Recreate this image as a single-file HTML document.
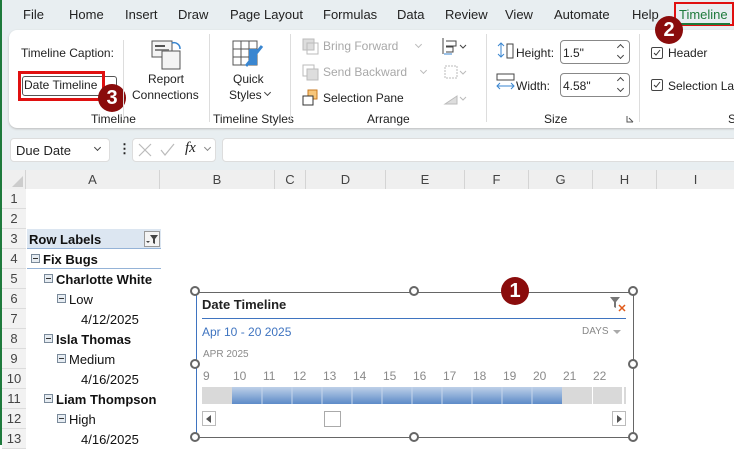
<!DOCTYPE html>
<html><head><meta charset="utf-8"><style>
*{margin:0;padding:0;box-sizing:border-box}
body{width:734px;height:445px;overflow:hidden;background:#fff;font-family:"Liberation Sans",sans-serif;font-size:12px;color:#222;position:relative}
.a{position:absolute;white-space:nowrap}
.menu{font-size:13px;top:7px;color:#222}
.rt{font-size:12px;color:#222}
.dis{color:#a8a8a8}
.cv{position:absolute;width:5px;height:5px;border-right:1.2px solid #444;border-bottom:1.2px solid #444;transform:rotate(45deg)}
.cu{position:absolute;width:5px;height:5px;border-left:1.2px solid #444;border-top:1.2px solid #444;transform:rotate(45deg)}
.cv.g{border-color:#bbb}
.badge{position:absolute;width:28px;height:28px;border-radius:50%;background:#8a0c0c;color:#fff;font-weight:bold;font-size:20px;text-align:center;line-height:28px}
.rh{position:absolute;left:2px;width:24px;height:20px;text-align:center;line-height:20px;font-size:13px;color:#444;border-bottom:1px solid #dcdcdc;background:#f2f2f2}
.cell{position:absolute;font-size:13px;line-height:20px;color:#111}
.b{font-weight:bold}
.mn{display:inline-block;width:9px;height:9px;border:1px solid #7a8a9a;background:#e6ecf2;vertical-align:1px;margin-right:3px;position:relative}
.mn:after{content:"";position:absolute;left:1px;right:1px;top:3px;height:1px;background:#333}
.ch{position:absolute;top:170px;height:19px;line-height:19px;text-align:center;font-size:13px;color:#444;border-right:1px solid #d4d4d4;background:#efefef}
.h{position:absolute;width:10px;height:10px;border:2px solid #666;border-radius:50%;background:#fff}
.day{position:absolute;top:369px;font-size:12px;color:#8a8a8a}
</style></head><body>
<div class="a" style="left:0;top:0;width:734px;height:170px;background:#e8eef1"></div>
<div class="a" style="left:0;top:0;width:2px;height:445px;background:#1e7a3c;z-index:5"></div>
<span class="a menu" style="left:23px">File</span>
<span class="a menu" style="left:69px">Home</span>
<span class="a menu" style="left:125px">Insert</span>
<span class="a menu" style="left:178px">Draw</span>
<span class="a menu" style="left:230px">Page Layout</span>
<span class="a menu" style="left:323px">Formulas</span>
<span class="a menu" style="left:397px">Data</span>
<span class="a menu" style="left:445px">Review</span>
<span class="a menu" style="left:505px">View</span>
<span class="a menu" style="left:554px">Automate</span>
<span class="a menu" style="left:632px">Help</span>
<div class="a" style="left:674px;top:2px;width:60px;height:24px;border:2px solid #e01010"></div>
<span class="a menu" style="left:679px;color:#1e7a3c">Timeline</span>
<div class="a" style="left:678px;top:23px;width:52px;height:2px;background:#1e7a3c"></div>
<div class="a" style="left:9px;top:30px;width:740px;height:98px;background:#fff;border-radius:8px;box-shadow:0 1px 2px #bbb"></div>
<span class="a rt" style="left:21px;top:46px">Timeline Caption:</span>
<div class="a" style="left:22px;top:76px;width:95px;height:20px;border:1px solid #555;border-radius:3px;background:#fff"></div>
<span class="a rt" style="left:24px;top:78px">Date Timeline</span>
<div class="a" style="left:18px;top:71px;width:87px;height:30px;border:3px solid #e01010"></div>
<div class="badge" style="left:98px;top:84px">3</div>
<span class="a rt" style="left:91px;top:112px">Timeline</span>
<div class="a" style="left:123px;top:40px;width:1px;height:80px;background:#ddd"></div>
<svg class="a" style="left:150px;top:37px" width="34" height="34"><rect x="2" y="4" width="20" height="16" fill="#f4f4f4" stroke="#555"/><rect x="5" y="8" width="10" height="2" fill="#555"/><rect x="5" y="12" width="14" height="2" fill="#888"/><rect x="12" y="14" width="18" height="18" fill="#f4f4f4" stroke="#555"/><path d="M22 6 a6 6 0 0 1 8 6" stroke="#3a86d0" fill="none" stroke-width="1.5"/></svg>
<span class="a rt" style="left:148px;top:72px">Report</span>
<span class="a rt" style="left:132px;top:88px">Connections</span>
<div class="a" style="left:209px;top:34px;width:1px;height:88px;background:#ddd"></div>
<svg class="a" style="left:232px;top:40px" width="34" height="30"><rect x="1" y="1" width="24" height="24" fill="#fff" stroke="#555"/><path d="M1 9h24M1 17h24M9 1v24M17 1v24" stroke="#555"/><rect x="17" y="9" width="8" height="16" fill="#3a86d0"/><path d="M14 26 L30 6" stroke="#3a86d0" stroke-width="3"/></svg>
<span class="a rt" style="left:233px;top:72px">Quick</span>
<span class="a rt" style="left:229px;top:88px">Styles</span><div class="cv" style="left:265px;top:90px"></div>
<span class="a rt" style="left:213px;top:112px">Timeline Styles</span>
<div class="a" style="left:290px;top:34px;width:1px;height:88px;background:#ddd"></div>
<svg class="a" style="left:302px;top:38px" width="18" height="70"><rect x="1" y="1" width="11" height="11" fill="#ddd" stroke="#bbb"/><rect x="5" y="5" width="11" height="11" fill="none" stroke="#bbb"/><rect x="1" y="27" width="11" height="11" fill="none" stroke="#bbb"/><rect x="5" y="31" width="11" height="11" fill="#ddd" stroke="#bbb"/><rect x="6" y="52" width="9" height="9" fill="#f7c67a" stroke="#c87a20"/><rect x="1" y="58" width="10" height="9" fill="#fff" stroke="#333"/></svg>
<span class="a rt dis" style="left:323px;top:39px">Bring Forward</span><div class="cv g" style="left:416px;top:42px"></div>
<span class="a rt dis" style="left:323px;top:65px">Send Backward</span><div class="cv g" style="left:421px;top:68px"></div>
<span class="a rt" style="left:323px;top:91px">Selection Pane</span>
<svg class="a" style="left:441px;top:36px" width="32" height="72"><path d="M2 2v16M5 5h10v5H5M5 11h7v5H5" stroke="#444" fill="none"/><path d="M3 18h8" stroke="#3a86d0"/><path d="M19 9l3 3 3-3" stroke="#444" fill="none"/><rect x="4" y="30" width="12" height="12" fill="none" stroke="#bbb" stroke-dasharray="2 1"/><path d="M19 35l3 3 3-3" stroke="#bbb" fill="none"/><path d="M4 68 L16 60 V68 Z" fill="#ddd" stroke="#bbb"/><path d="M19 61l3 3 3-3" stroke="#bbb" fill="none"/></svg>
<span class="a rt" style="left:367px;top:112px">Arrange</span>
<div class="a" style="left:486px;top:34px;width:1px;height:88px;background:#ddd"></div>
<svg class="a" style="left:496px;top:42px" width="20" height="52"><path d="M5 1v14M2 4l3-3 3 3M2 12l3 3 3-3" stroke="#3a86d0" fill="none"/><rect x="11" y="2" width="6" height="14" fill="none" stroke="#444"/><rect x="1" y="32" width="17" height="6" fill="none" stroke="#444"/><path d="M1 44h17M4 41l-3 3 3 3M15 41l3 3-3 3" stroke="#3a86d0" fill="none"/></svg>
<span class="a rt" style="left:516px;top:46px">Height:</span>
<span class="a rt" style="left:516px;top:79px">Width:</span>
<div class="a" style="left:560px;top:40px;width:70px;height:24px;border:1px solid #888;border-radius:4px"></div>
<div class="a" style="left:560px;top:73px;width:70px;height:24px;border:1px solid #888;border-radius:4px"></div>
<span class="a rt" style="left:563px;top:46px">1.5"</span>
<span class="a rt" style="left:563px;top:79px">4.58"</span>
<div class="cu" style="left:618px;top:45px"></div><div class="cv" style="left:618px;top:53px"></div>
<div class="cu" style="left:618px;top:78px"></div><div class="cv" style="left:618px;top:86px"></div>
<span class="a rt" style="left:544px;top:112px">Size</span>
<svg class="a" style="left:626px;top:115px" width="8" height="8"><path d="M1 1v6h6M3 3l4 4" stroke="#555" fill="none"/></svg>
<div class="a" style="left:639px;top:34px;width:1px;height:88px;background:#ddd"></div>
<div class="a" style="left:651px;top:47px;width:12px;height:12px;border:1px solid #444;border-radius:2px"></div><svg class="a" style="left:651px;top:47px" width="12" height="12"><path d="M3 6l2 2 4-5" stroke="#333" fill="none"/></svg>
<span class="a rt" style="left:668px;top:46px">Header</span>
<div class="a" style="left:651px;top:79px;width:12px;height:12px;border:1px solid #444;border-radius:2px"></div><svg class="a" style="left:651px;top:79px" width="12" height="12"><path d="M3 6l2 2 4-5" stroke="#333" fill="none"/></svg>
<span class="a rt" style="left:668px;top:79px">Selection Lab</span>
<span class="a rt" style="left:728px;top:112px">S</span>
<div class="badge" style="left:655px;top:16px">2</div>
<!-- formula bar -->
<div class="a" style="left:10px;top:138px;width:100px;height:24px;background:#fff;border-radius:4px;border:1px solid #ddd"></div>
<span class="a" style="left:16px;top:143px;font-size:13px">Due Date</span>
<div class="cv" style="left:95px;top:145px"></div>
<span class="a" style="left:118px;top:141px;font-size:13px;font-weight:bold">⋮</span>
<div class="a" style="left:132px;top:138px;width:84px;height:24px;background:#fff;border-radius:4px;border:1px solid #ddd"></div>
<svg class="a" style="left:138px;top:143px" width="40" height="14"><path d="M1 1l12 12M13 1L1 13" stroke="#bbb" stroke-width="1.2"/><path d="M23 7l4 5 9-11" stroke="#bbb" stroke-width="1.2" fill="none"/></svg>
<span class="a" style="left:185px;top:140px;font-size:15px;font-style:italic;font-family:'Liberation Serif',serif">fx</span>
<div class="cv g" style="left:205px;top:145px;border-color:#888"></div>
<div class="a" style="left:222px;top:138px;width:520px;height:24px;background:#fff;border-radius:4px;border:1px solid #ddd"></div>
<!-- column headers -->
<div class="a" style="left:2px;top:170px;width:732px;height:19px;background:#efefef;border-bottom:1px solid #bbb"></div>
<div class="ch" style="left:2px;width:24px"></div>
<svg class="a" style="left:12px;top:176px" width="12" height="12"><path d="M11 0V11H0Z" fill="#ccc"/></svg>
<div class="ch" style="left:26px;width:134px">A</div>
<div class="ch" style="left:160px;width:115px">B</div>
<div class="ch" style="left:275px;width:31px">C</div>
<div class="ch" style="left:306px;width:80px">D</div>
<div class="ch" style="left:386px;width:79px">E</div>
<div class="ch" style="left:465px;width:64px">F</div>
<div class="ch" style="left:529px;width:64px">G</div>
<div class="ch" style="left:593px;width:64px">H</div>
<div class="ch" style="left:657px;width:77px;border:none">I</div>
<div class="a" style="left:2px;top:189px;width:24px;height:256px;background:#f2f2f2;border-right:1px solid #ccc"></div>
<div class="rh" style="top:189px">1</div><div class="rh" style="top:209px">2</div><div class="rh" style="top:229px">3</div><div class="rh" style="top:249px">4</div><div class="rh" style="top:269px">5</div><div class="rh" style="top:289px">6</div><div class="rh" style="top:309px">7</div><div class="rh" style="top:329px">8</div><div class="rh" style="top:349px">9</div><div class="rh" style="top:369px">10</div><div class="rh" style="top:389px">11</div><div class="rh" style="top:409px">12</div><div class="rh" style="top:429px">13</div>
<div class="a" style="left:27px;top:229px;width:134px;height:20px;background:#dce6f1;border-bottom:1px solid #95b3d7"></div>
<span class="cell b" style="left:29px;top:230px">Row Labels</span>
<div class="a" style="left:144px;top:231px;width:16px;height:16px;border:1px solid #999;background:#f4f4f4"></div>
<svg class="a" style="left:145px;top:232px" width="14" height="14"><path d="M5 3h8l-3 4v5l-2-1V7z" fill="#444"/><path d="M1 9h4l-2 2z" fill="#444"/></svg>
<div class="a" style="left:27px;top:268px;width:134px;height:1px;background:#95b3d7"></div>
<span class="cell b" style="left:31px;top:250px"><i class="mn"></i>Fix Bugs</span>
<span class="cell b" style="left:44px;top:270px"><i class="mn"></i>Charlotte White</span>
<span class="cell" style="left:57px;top:290px"><i class="mn"></i>Low</span>
<span class="cell" style="left:81px;top:310px">4/12/2025</span>
<span class="cell b" style="left:44px;top:330px"><i class="mn"></i>Isla Thomas</span>
<span class="cell" style="left:57px;top:350px"><i class="mn"></i>Medium</span>
<span class="cell" style="left:81px;top:370px">4/16/2025</span>
<span class="cell b" style="left:44px;top:390px"><i class="mn"></i>Liam Thompson</span>
<span class="cell" style="left:57px;top:410px"><i class="mn"></i>High</span>
<span class="cell" style="left:81px;top:430px">4/16/2025</span>
<!-- timeline -->
<div class="a" style="left:196px;top:292px;width:438px;height:146px;border:1.5px solid #666;border-left-color:#3f74c0;background:#fff"></div>
<span class="a b" style="left:202px;top:297px;font-size:13px">Date Timeline</span>
<svg class="a" style="left:609px;top:296px" width="18" height="16"><path d="M1 1h10l-4 5v6l-2 -1v-5z" fill="#777"/><path d="M10 9l6 6M16 9l-6 6" stroke="#e05a1a" stroke-width="1.5"/></svg>
<div class="a" style="left:202px;top:318px;width:424px;height:1px;background:#3f74c0"></div>
<span class="a" style="left:202px;top:325px;font-size:12px;color:#3f74c0">Apr 10 - 20 2025</span>
<span class="a" style="left:582px;top:326px;font-size:10px;color:#888">DAYS</span>
<svg class="a" style="left:613px;top:330px" width="8" height="5"><path d="M0 0h8l-4 4z" fill="#aaa"/></svg>
<span class="a" style="left:203px;top:349px;font-size:10px;color:#8a8a8a">APR 2025</span>
<span class="day" style="left:203px">9</span><span class="day" style="left:233px">10</span><span class="day" style="left:263px">11</span><span class="day" style="left:293px">12</span><span class="day" style="left:323px">13</span><span class="day" style="left:353px">14</span><span class="day" style="left:383px">15</span><span class="day" style="left:413px">16</span><span class="day" style="left:443px">17</span><span class="day" style="left:473px">18</span><span class="day" style="left:503px">19</span><span class="day" style="left:533px">20</span><span class="day" style="left:563px">21</span><span class="day" style="left:593px">22</span>
<div class="a" style="left:202px;top:387px;width:424px;height:17px;background:#d9d9d9"></div>
<div class="a" style="left:232px;top:387px;width:330px;height:17px;background:linear-gradient(#bed0e8,#5d8bc8)"></div>
<svg class="a" style="left:232px;top:387px" width="330" height="17"><path d="M30 0v17M60 0v17M90 0v17M120 0v17M150 0v17M180 0v17M210 0v17M240 0v17M270 0v17M300 0v17" stroke="#c6d6ec" stroke-width="1"/></svg>
<div class="a" style="left:592px;top:387px;width:1px;height:17px;background:#fff"></div>
<div class="a" style="left:622px;top:387px;width:2px;height:17px;background:#fff"></div>
<div class="a" style="left:202px;top:411px;width:14px;height:15px;border:1px solid #bbb"></div><svg class="a" style="left:206px;top:415px" width="6" height="8"><path d="M5 0v8L0 4z" fill="#555"/></svg>
<div class="a" style="left:324px;top:411px;width:17px;height:16px;border:1px solid #aaa"></div>
<div class="a" style="left:612px;top:411px;width:14px;height:15px;border:1px solid #bbb"></div><svg class="a" style="left:617px;top:415px" width="6" height="8"><path d="M0 0v8l5-4z" fill="#555"/></svg>
<div class="h" style="left:190px;top:286px"></div><div class="h" style="left:409px;top:286px"></div><div class="h" style="left:628px;top:286px"></div>
<div class="h" style="left:190px;top:359px"></div><div class="h" style="left:628px;top:359px"></div>
<div class="h" style="left:190px;top:432px"></div><div class="h" style="left:409px;top:432px"></div><div class="h" style="left:628px;top:432px"></div>
<div class="badge" style="left:501px;top:277px">1</div>
</body></html>
